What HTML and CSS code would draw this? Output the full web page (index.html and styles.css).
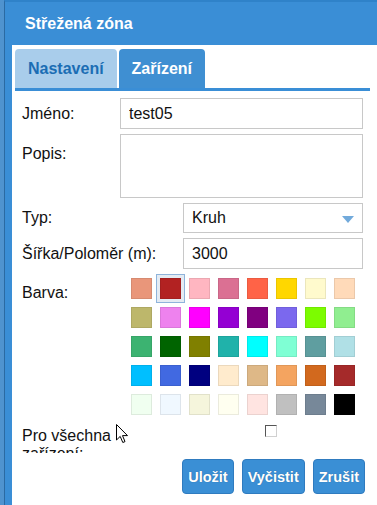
FILE: index.html
```html
<!DOCTYPE html>
<html lang="cs">
<head>
    <meta charset="UTF-8">
    <meta name="viewport" content="width=device-width, initial-scale=1.0">
    <title>Střežená zóna</title>
    <link rel="stylesheet" href="styles.css">
</head>
<body>
    <div class="dialog">
        <div class="header">Střežená zóna</div>
        <div class="content">
            <div class="tabs">
                <div class="tab active">Nastavení</div>
                <div class="tab">Zařízení</div>
            </div>
            <div class="form">
                <div class="row">
                    <label class="lbl lbl-short" for="name">Jméno:</label>
                    <input id="name" class="field" type="text" value="test05">
                </div>
                <div class="row">
                    <label class="lbl lbl-short lbl-top" for="desc">Popis:</label>
                    <textarea id="desc" class="field area"></textarea>
                </div>
                <div class="row">
                    <label class="lbl lbl-long">Typ:</label>
                    <div class="field select">Kruh<span class="arrow"></span></div>
                </div>
                <div class="row">
                    <label class="lbl lbl-long" for="radius">Šířka/Poloměr (m):</label>
                    <input id="radius" class="field" type="text" value="3000">
                </div>
                <div class="row">
                    <label class="lbl lbl-swatch">Barva:</label>
                    <div class="swatches" id="swatches"></div>
                </div>
                <div class="row check-row">
                    <label class="lbl lbl-check" for="all">Pro všechna zařízení:</label>
                    <input id="all" class="check" type="checkbox">
                </div>
                <div class="buttons">
                    <button>Uložit</button>
                    <button>Vyčistit</button>
                    <button>Zrušit</button>
                </div>
            </div>
        </div>
    </div>

    <svg class="cursor" width="13" height="20" viewBox="0 0 13 20">
        <path d="M0.5 0.5 L0.5 16 L4.2 12.4 L6.8 18.5 L9 17.6 L6.5 11.6 L11.5 11.6 Z" fill="#fff" stroke="#000" stroke-width="1"/>
    </svg>

    <script>
        const colors = [
            '#e9967a', '#b22222', '#ffb6c1', '#db7093', '#ff6347', '#ffd700', '#fffacd', '#ffdab9',
            '#bdb76b', '#ee82ee', '#ff00ff', '#9400d3', '#800080', '#7b68ee', '#7cfc00', '#90ee90',
            '#3cb371', '#006400', '#808000', '#20b2aa', '#00ffff', '#7fffd4', '#5f9ea0', '#b0e0e6',
            '#00bfff', '#4169e1', '#000080', '#ffebcd', '#deb887', '#f4a460', '#d2691e', '#a52a2a',
            '#f0fff0', '#f0f8ff', '#f5f5dc', '#fffff0', '#ffe4e1', '#c0c0c0', '#778899', '#000000'
        ];
        const box = document.getElementById('swatches');
        colors.forEach((c, i) => {
            const cell = document.createElement('div');
            cell.className = 'cell' + (i === 1 ? ' selected' : '');
            const sw = document.createElement('span');
            sw.className = 'swatch';
            sw.style.background = c;
            cell.appendChild(sw);
            box.appendChild(cell);
        });
    </script>
</body>
</html>
```

FILE: styles.css
```css
body {
    margin: 0;
    background: #4f93cf;
    font-family: "Liberation Sans", Arial, sans-serif;
    color: #111;
    height: 505px;
    overflow: hidden;
    position: relative;
}
.dialog {
    margin-left: 4px;
    border-left: 1px solid #2a6aa3;
    border-top: 2px solid #2f82c9;
    background: #3a8ed6;
    height: 503px;
    overflow: hidden;
}
.header {
    height: 43px;
    line-height: 43px;
    padding-left: 20px;
    color: #fff;
    font-weight: bold;
    font-size: 16px;
}
.content {
    margin-left: 7px;
    background: #fff;
    height: 456px;
    padding: 4px 7px 0 3px;
}
.tabs {
    display: flex;
    gap: 2px;
    border-bottom: 3px solid #3a8ed6;
}
.tab {
    height: 39px;
    line-height: 39px;
    padding: 0 13px;
    font-weight: bold;
    font-size: 16px;
    color: #fff;
    background: #3f8fd2;
    border-radius: 4px 4px 0 0;
}
.tab.active {
    background: #a9cdeb;
    color: #1b6db4;
}
.form {
    padding: 7px 7px 0 7px;
}
.row {
    display: flex;
    align-items: center;
    margin-bottom: 5px;
}
.lbl {
    font-size: 16px;
    flex: none;
}
.lbl-short {
    width: 98px;
}
.lbl-long {
    width: 161px;
}
.lbl-top {
    align-self: flex-start;
    padding-top: 11px;
}
.lbl-swatch {
    width: 105px;
    align-self: flex-start;
    padding-top: 10px;
}
.field {
    flex: 1;
    min-width: 0;
    box-sizing: border-box;
    height: 31px;
    border: 1px solid #c8c8c8;
    padding: 0 8px;
    font-family: "Liberation Sans", Arial, sans-serif;
    font-size: 16px;
    color: #111;
    outline: none;
    margin: 0;
}
.area {
    height: 64px;
    resize: none;
}
.select {
    height: 30px;
    line-height: 28px;
    position: relative;
}
.arrow {
    position: absolute;
    right: 8px;
    top: 12px;
    border-left: 6px solid transparent;
    border-right: 6px solid transparent;
    border-top: 7px solid #72aadb;
}
.swatches {
    display: grid;
    grid-template-columns: repeat(8, 29px);
    grid-auto-rows: 29px;
}
.cell {
    box-sizing: border-box;
    border: 1px solid transparent;
    padding: 3px;
}
.cell.selected {
    border-color: #8fb4db;
    background: #e4ebf3;
}
.swatch {
    display: block;
    width: 21px;
    height: 21px;
    box-sizing: border-box;
    border: 1px solid rgba(0, 0, 0, 0.08);
}
.check-row {
    align-items: flex-start;
    margin-top: 8px;
    margin-bottom: 0;
}
.lbl-check {
    width: 110px;
    height: 26px;
    line-height: 18px;
    overflow: hidden;
}
.check {
    appearance: none;
    -webkit-appearance: none;
    width: 12px;
    height: 12px;
    margin: -2px 0 0 133px;
    border: 1px solid;
    border-color: #555 #d0d0d0 #d0d0d0 #555;
    background: #fff;
}
.buttons {
    display: flex;
    justify-content: flex-end;
    gap: 8px;
    margin-top: 6px;
    margin-right: -2px;
}
button {
    height: 35px;
    padding: 0 5px;
    font-family: "Liberation Sans", Arial, sans-serif;
    font-size: 14.5px;
    font-weight: bold;
    color: #fff;
    background: #3a8fd5;
    border: 1px solid #2f7bbf;
    border-radius: 4px;
    text-shadow: 0 0 1px rgba(0, 0, 0, 0.3);
    cursor: pointer;
}
.cursor {
    position: absolute;
    left: 116px;
    top: 424px;
}
```
